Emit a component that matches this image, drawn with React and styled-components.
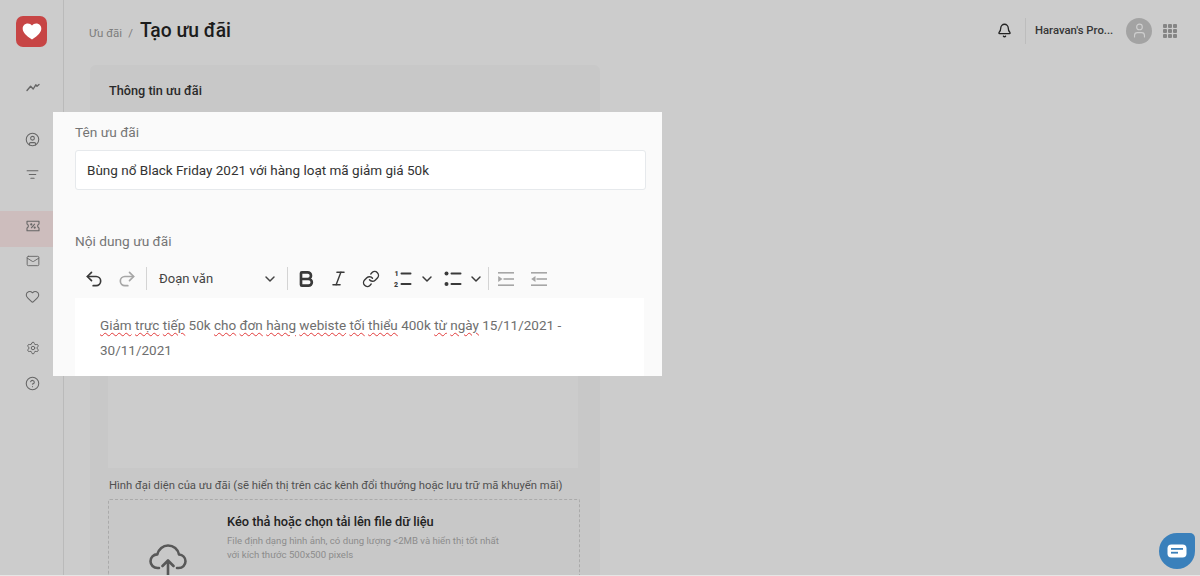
import React from 'react';
import styled, { createGlobalStyle } from 'styled-components';
import {
  Undo2, Redo2, ChevronDown, Bold, Italic, Link, Bell, User, Mail, Heart,
  Settings, CircleHelp, CircleUser, ListFilter,
} from 'lucide-react';

const GlobalStyle = createGlobalStyle`
  html, body {
    margin: 0;
    padding: 0;
    background: #cccccc;
    font-family: Roboto, "Noto Sans", sans-serif;
  }
`;

const Page = styled.div`
  position: relative;
  display: flex;
  width: 1200px;
  height: 576px;
  box-sizing: border-box;
  border-bottom: 1px solid #e6e6e6;
  overflow: hidden;
  background: #cccccc;
`;

const Sidebar = styled.nav`
  flex: none;
  width: 63px;
  border-right: 1px solid #bababa;
  display: flex;
  flex-direction: column;
  gap: 17px;
  padding-top: 16px;
  color: #666666;
`;

const Logo = styled.div`
  width: 31px;
  height: 31px;
  margin: 0 0 5.5px 16px;
  border-radius: 7px;
  background: #c74545;
  display: flex;
  align-items: center;
  justify-content: center;
`;

const NavGroup = styled.div`
  display: flex;
  flex-direction: column;
`;

const NavItem = styled.div`
  height: 35px;
  flex: none;
  box-sizing: border-box;
  display: flex;
  align-items: center;
  justify-content: center;
  padding-left: 2px;
  ${(p) => p.$active && `
    height: 35.5px;
    margin: 2.5px 0 -3px;
    padding-bottom: 5.5px;
    background: #cdbdbd;
  `}
`;

const Main = styled.main`
  flex: 1;
  min-width: 0;
  display: flex;
  flex-direction: column;
`;

const Header = styled.header`
  height: 65px;
  flex: none;
  box-sizing: border-box;
  display: flex;
  align-items: center;
  padding: 0 23px 4px 25px;
`;

const Crumb = styled.span`
  margin-top: 4px;
  font-size: 11.5px;
  color: #7d7d7d;
`;

const CrumbSep = styled.span`
  margin: 4px 7px 0 6px;
  font-size: 11.5px;
  color: #7d7d7d;
`;

const PageTitle = styled.h1`
  margin: 0;
  font-size: 19.3px;
  line-height: 26px;
  font-weight: 500;
  color: #1c1c1c;
`;

const HeaderRight = styled.div`
  margin-left: auto;
  display: flex;
  align-items: center;
  color: #222222;
`;

const Divider = styled.div`
  width: 1px;
  height: 26px;
  background: #bdbdbd;
  margin: 0 9px 0 13px;
`;

const Account = styled.span`
  font-size: 11.3px;
  font-weight: 500;
  color: #363636;
  width: 78px;
  margin-right: 13px;
  white-space: nowrap;
`;

const Avatar = styled.div`
  width: 26px;
  height: 26px;
  border-radius: 50%;
  background: #a3a3a3;
  display: flex;
  align-items: center;
  justify-content: center;
  margin-right: 11px;
`;

const AppsGrid = styled.div`
  display: grid;
  grid-template-columns: repeat(3, 4px);
  grid-auto-rows: 4px;
  gap: 1px;

  span {
    background: #858585;
    border-radius: 1px;
  }
`;

const Card = styled.section`
  width: 510px;
  margin-left: 26px;
  flex: 1;
  background: #c8c8c8;
  border-radius: 6px 6px 0 0;
  padding: 19px 20px 0 18px;
  box-sizing: border-box;
  display: flex;
  flex-direction: column;
`;

const CardTitle = styled.h2`
  margin: 0 0 0 1px;
  font-size: 12.7px;
  line-height: 14px;
  font-weight: 500;
  color: #2a2a2a;
`;

const EditorShade = styled.div`
  height: 351px;
  margin: 19px 2px 0 0;
  flex: none;
  background: #cccccc;
`;

const FieldLabel = styled.div`
  margin: 11px 0 0 1px;
  font-size: 11.3px;
  line-height: 14px;
  color: #505050;
  white-space: nowrap;
`;

const DropZone = styled.div`
  margin-top: 6px;
  flex: 1;
  border: 1px dashed #aaaaaa;
  border-bottom: 0;
  border-radius: 2px 2px 0 0;
  display: grid;
  grid-template-columns: 118px 1fr;
`;

const CloudBox = styled.div`
  display: flex;
  justify-content: center;
  align-items: flex-end;
  margin-bottom: -4px;
  color: #585858;
`;

const DropBody = styled.div`
  padding-top: 14px;
`;

const DropTitle = styled.div`
  font-size: 12.8px;
  line-height: 16px;
  font-weight: 500;
  color: #222222;
`;

const DropHint = styled.div`
  margin-top: 4px;
  font-size: 9.6px;
  line-height: 14px;
  color: #8c8c8c;
`;

const Spotlight = styled.div`
  position: absolute;
  left: 53px;
  top: 112px;
  width: 609px;
  height: 264px;
  box-sizing: border-box;
  overflow: hidden;
  background: #fafafa;
  padding: 12px 16px 0 22px;
`;

const Label = styled.div`
  font-size: 13.7px;
  line-height: 16px;
  color: #757575;
`;

const TextInput = styled.div`
  margin-top: 10px;
  height: 40px;
  box-sizing: border-box;
  padding: 0 11px;
  background: #ffffff;
  border: 1px solid #e6e9ec;
  border-radius: 3px;
  display: flex;
  align-items: center;
  font-size: 13.5px;
  color: #333333;
`;

const ContentLabel = styled(Label)`
  margin-top: 43px;
`;

const Toolbar = styled.div`
  height: 39px;
  margin-top: 10px;
  display: flex;
  align-items: center;
  padding-left: 9px;
  color: #333333;
`;

const ToolButton = styled.span`
  display: flex;
  align-items: center;
  justify-content: center;
  width: ${(p) => p.$w || 32}px;
  color: ${(p) => (p.$muted ? '#a6a6a6' : '#3a3a3a')};

  svg {
    flex: none;
  }
`;

const ToolSep = styled.span`
  width: 1px;
  height: 23px;
  background: #d4d4d4;
  margin: ${(p) => p.$m || '0 3px'};
`;

const BlockSelect = styled.span`
  width: 134px;
  display: flex;
  align-items: center;
  justify-content: space-between;
  padding: 0 6px 0 9px;
  box-sizing: border-box;
  font-size: 13px;
  color: #444444;
`;

const EditorBody = styled.div`
  width: 569px;
  height: 100px;
  box-sizing: border-box;
  background: #ffffff;
  padding: 15px 25px;
  font-size: 13.5px;
  line-height: 25px;
  color: #6e6e6e;
`;

const Typo = styled.span`
  text-decoration: underline wavy #e23b3b 1px;
  text-underline-offset: 2px;
`;

const ChatBubble = styled.div`
  position: absolute;
  right: 5px;
  bottom: 6px;
  width: 36px;
  height: 36px;
  background: #3a80bb;
  border-radius: 50% 5px 50% 50%;
  display: flex;
  align-items: center;
  justify-content: center;
`;

const TrendIcon = () => (
  <svg width="16" height="16" viewBox="0 0 16 16" fill="none" stroke="currentColor" strokeWidth="1.4" strokeLinejoin="round" strokeLinecap="round">
    <path d="M2 11.5 5.6 7.2 8.2 10 10.8 5.8 12 7.2 14 5.5" />
  </svg>
);

const VoucherIcon = () => (
  <svg width="14" height="12" viewBox="0 0 14 12" fill="none" stroke="currentColor" strokeWidth="1.1" strokeLinejoin="round">
    <path d="M1 1.2h12v2.9a2 2 0 0 0 0 3.8v2.9H1V7.9a2 2 0 0 0 0-3.8Z" />
    <path d="M5.2 8.2 8.8 3.8" />
    <circle cx="5.3" cy="4.4" r=".55" fill="currentColor" />
    <circle cx="8.7" cy="7.6" r=".55" fill="currentColor" />
  </svg>
);

const OrderedIcon = () => (
  <svg width="20" height="20" viewBox="0 0 20 20" fill="#3a3a3a">
    <text x="1.5" y="7" fontSize="7" fontWeight="900" fontFamily="Roboto, sans-serif">1</text>
    <text x="1" y="18" fontSize="7" fontWeight="900" fontFamily="Roboto, sans-serif">2</text>
    <rect x="7.5" y="3.5" width="11" height="2" rx="1" />
    <rect x="7.5" y="14" width="11" height="2" rx="1" />
  </svg>
);

const BulletIcon = () => (
  <svg width="20" height="20" viewBox="0 0 20 20" fill="#3a3a3a">
    <circle cx="3.5" cy="4.5" r="2" />
    <circle cx="3.5" cy="15" r="2" />
    <rect x="7.5" y="3.5" width="11" height="2" rx="1" />
    <rect x="7.5" y="14" width="11" height="2" rx="1" />
  </svg>
);

const IndentIcon = ({ out }) => (
  <svg width="18" height="18" viewBox="0 0 18 18" fill="#a6a6a6">
    <rect x="1" y="2" width="16" height="1.6" />
    <rect x="6.5" y="8.2" width="10.5" height="1.6" />
    <rect x="1" y="14.4" width="16" height="1.6" />
    <path d={out ? 'M5.5 6 1.2 9 5.5 12Z' : 'M1.2 6 5.5 9 1.2 12Z'} />
  </svg>
);

const CloudUploadIcon = () => (
  <svg width="40" height="36" viewBox="0 0 40 36" fill="none" stroke="currentColor" strokeWidth="2.6" strokeLinecap="round" strokeLinejoin="round">
    <path d="M11 25H9.5C5.5 25 2.5 22 2.5 18.2c0-3.8 3-6.8 6.8-6.8C10.6 6 15 2.5 20 2.5c5.6 0 10 3.8 11 9 3.6.4 6.5 3.2 6.5 6.8 0 3.8-3 6.7-6.8 6.7H29" />
    <path d="M20 35V18M14.5 23 20 17.5 25.5 23" />
  </svg>
);

const Word = ({ children }) => <Typo>{children}</Typo>;

const App = () => (
  <>
    <GlobalStyle />
    <Page>
      <Sidebar>
        <Logo>
          <svg width="20" height="17" viewBox="0 0 24 21" fill="#ffffff">
            <path d="M12 20.5C4.5 15.5.5 11.5.5 6.8.5 3.2 3.2.5 6.8.5 8.9.5 10.8 1.5 12 3.2 13.2 1.5 15.1.5 17.2.5c3.6 0 6.3 2.7 6.3 6.3 0 4.7-4 8.7-11.5 13.7Z" />
          </svg>
        </Logo>
        <NavGroup>
          <NavItem><TrendIcon /></NavItem>
        </NavGroup>
        <NavGroup>
          <NavItem><CircleUser size={15} strokeWidth={1.7} /></NavItem>
          <NavItem><ListFilter size={13} strokeWidth={2} /></NavItem>
        </NavGroup>
        <NavGroup>
          <NavItem $active><VoucherIcon /></NavItem>
          <NavItem><Mail size={14} strokeWidth={1.6} /></NavItem>
          <NavItem><Heart size={15} strokeWidth={1.7} /></NavItem>
        </NavGroup>
        <NavGroup>
          <NavItem><Settings size={14} strokeWidth={1.7} /></NavItem>
          <NavItem><CircleHelp size={15} strokeWidth={1.7} /></NavItem>
        </NavGroup>
      </Sidebar>

      <Main>
        <Header>
          <Crumb>Ưu đãi</Crumb>
          <CrumbSep>/</CrumbSep>
          <PageTitle>Tạo ưu đãi</PageTitle>
          <HeaderRight>
            <Bell size={15} strokeWidth={2.1} />
            <Divider />
            <Account>Haravan's Pro...</Account>
            <Avatar><User size={17} color="#cfcfcf" strokeWidth={1.6} /></Avatar>
            <AppsGrid>
              {Array.from({ length: 9 }, (_, i) => <span key={i} />)}
            </AppsGrid>
          </HeaderRight>
        </Header>

        <Card>
          <CardTitle>Thông tin ưu đãi</CardTitle>
          <EditorShade />
          <FieldLabel>Hình đại diện của ưu đãi (sẽ hiển thị trên các kênh đổi thưởng hoặc lưu trữ mã khuyến mãi)</FieldLabel>
          <DropZone>
            <CloudBox><CloudUploadIcon /></CloudBox>
            <DropBody>
              <DropTitle>Kéo thả hoặc chọn tải lên file dữ liệu</DropTitle>
              <DropHint>
                File định dạng hình ảnh, có dung lượng &lt;2MB và hiển thị tốt nhất<br />
                với kích thước 500x500 pixels
              </DropHint>
            </DropBody>
          </DropZone>
        </Card>
      </Main>

      <Spotlight>
        <Label>Tên ưu đãi</Label>
        <TextInput>Bùng nổ Black Friday 2021 với hàng loạt mã giảm giá 50k</TextInput>
        <ContentLabel>Nội dung ưu đãi</ContentLabel>
        <Toolbar>
          <ToolButton $w={20}><Undo2 size={20} strokeWidth={2} /></ToolButton>
          <ToolButton $w={46} $muted><Redo2 size={20} strokeWidth={2} /></ToolButton>
          <ToolSep $m="0 3px 0 -4px" />
          <BlockSelect>Đoạn văn <ChevronDown size={16} strokeWidth={2.2} /></BlockSelect>
          <ToolSep $m="0 2px 0 3px" />
          <ToolButton $w={32}><Bold size={20} strokeWidth={3.2} /></ToolButton>
          <ToolButton $w={32}><Italic size={19} strokeWidth={1.8} /></ToolButton>
          <ToolButton $w={34}><Link size={18} strokeWidth={1.9} /></ToolButton>
          <ToolButton $w={30}><OrderedIcon /></ToolButton>
          <ToolButton $w={18}><ChevronDown size={16} strokeWidth={2.2} /></ToolButton>
          <ToolButton $w={34}><BulletIcon /></ToolButton>
          <ToolButton $w={12}><ChevronDown size={16} strokeWidth={2.2} /></ToolButton>
          <ToolSep $m="0 5px 0 6px" />
          <ToolButton $w={24}><IndentIcon /></ToolButton>
          <ToolButton $w={42}><IndentIcon out /></ToolButton>
        </Toolbar>
        <EditorBody>
          <Word>Giảm</Word> <Word>trực</Word> <Word>tiếp</Word> 50k <Word>cho</Word> <Word>đơn</Word> <Word>hàng</Word> <Word>webiste</Word> <Word>tối</Word> <Word>thiểu</Word> 400k <Word>từ</Word> <Word>ngày</Word> 15/11/2021 - 30/11/2021
        </EditorBody>
      </Spotlight>

      <ChatBubble>
        <svg width="22" height="16" viewBox="0 0 22 16" fill="none">
          <rect x="1.5" y="1.5" width="19" height="13" rx="4" fill="#ffffff" />
          <rect x="5" y="5" width="12" height="1.8" fill="#3a80bb" />
          <rect x="5" y="8.8" width="7" height="1.8" fill="#3a80bb" />
        </svg>
      </ChatBubble>
    </Page>
  </>
);

export default App;
